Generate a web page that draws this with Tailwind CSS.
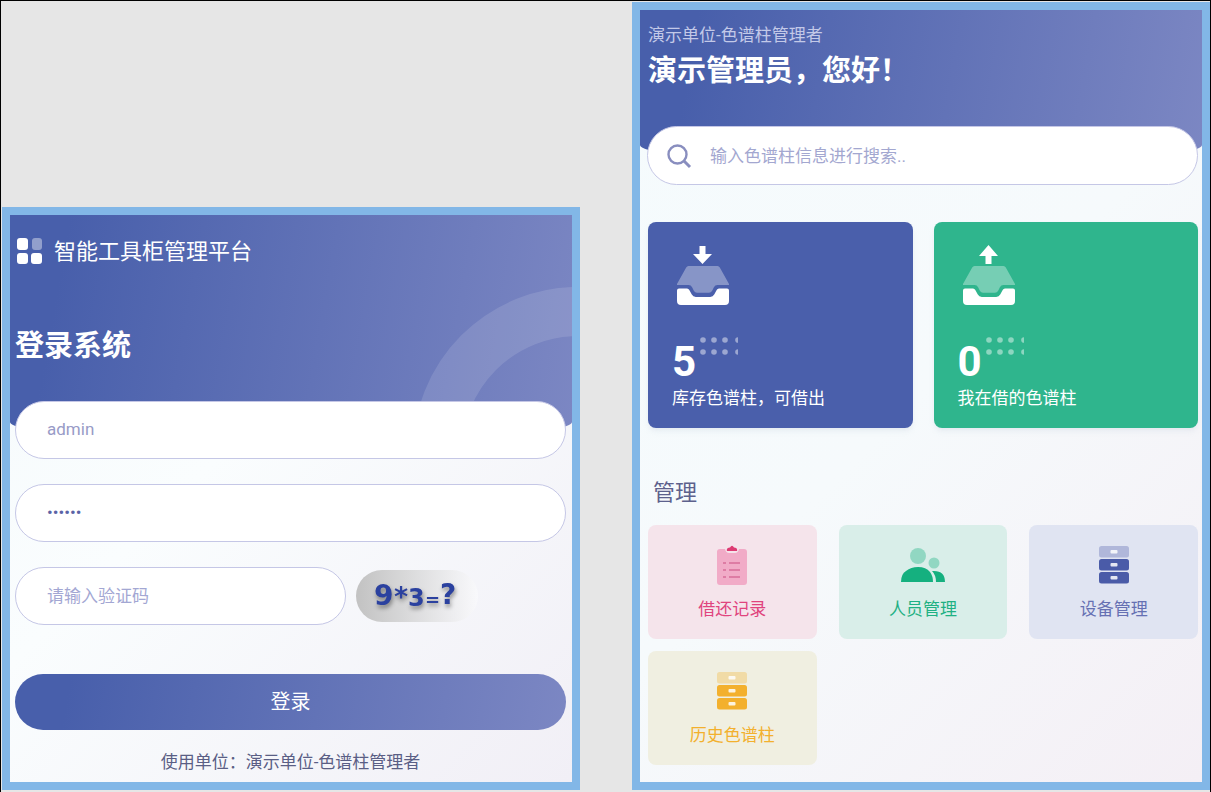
<!DOCTYPE html>
<html lang="zh-CN">
<head>
<meta charset="utf-8">
<meta name="viewport" content="width=device-width, initial-scale=1">
<title>智能工具柜管理平台</title>
<script src="https://cdn.jsdelivr.net/npm/@tailwindcss/browser@4"></script>
</head>
<body class="bg-[#e6e6e6] font-[Roboto,'Noto_Sans_CJK_SC',sans-serif] text-[17px] leading-6">
<svg class="hidden" aria-hidden="true">
  <symbol id="tray" viewBox="0 0 54 40">
    <path d="M12.500 1h29q1.600 0 2.300 1.500L53 19v1H41.500q-2.500 0-3.600 2.300L36 26q-1 1.800-3 1.800H21q-2 0-3-1.800l-1.900-3.700Q15 20 12.500 20H1v-1l9.200-16.500Q11 1 12.500 1z" fill="#fff" opacity=".34"/>
    <path d="M3 23.500h8q1.600 0 2.300 1.500l2.500 4.600q1.200 2.400 4 2.400h14.400q2.800 0 4-2.400l2.500-4.600q.7-1.500 2.300-1.500h8q2 0 2 2V36q0 4-4 4H5q-4 0-4-4V25.500q0-2 2-2z" fill="#fff"/>
  </symbol>
  <symbol id="dots" viewBox="0 0 38 18">
    <g fill="#fff" opacity=".45">
      <circle cx="3" cy="3" r="2.800"/><circle cx="14" cy="3" r="2.800"/><circle cx="25" cy="3" r="2.800"/><path d="M38 .2a2.800 2.800 0 0 0 0 5.600z"/>
      <circle cx="3" cy="15" r="2.800"/><circle cx="14" cy="15" r="2.800"/><circle cx="25" cy="15" r="2.800"/><path d="M38 12.200a2.800 2.800 0 0 0 0 5.600z"/>
    </g>
  </symbol>
  <symbol id="drawers" viewBox="0 0 32 40">
    <rect x="1" y="1" width="30" height="11.500" rx="2.500" fill="currentColor" opacity=".32"/>
    <rect x="1" y="14" width="30" height="11.500" rx="2.500" fill="currentColor"/>
    <rect x="1" y="27" width="30" height="11.500" rx="2.500" fill="currentColor"/>
    <g fill="#fff" opacity=".85"><rect x="12.500" y="5" width="7" height="3.500" rx="1"/><rect x="12.500" y="18" width="7" height="3.500" rx="1"/><rect x="12.500" y="31" width="7" height="3.500" rx="1"/></g>
  </symbol>
</svg>

<main class="flex min-h-screen items-end gap-[52px] border-x border-t border-black pb-[2px] pl-px pt-px">

  <section class="min-w-0 flex-1 border-8 border-[#82b7e7] bg-linear-135 from-[#f5fafc] via-[#fafdfe] via-40% to-[#f1eff6]">
    <header class="relative h-[227px] overflow-hidden rounded-b-[50%_20px] bg-linear-[100deg] from-[#485fab] from-10% to-[#7c87c3] pl-[5px] pt-5">
      <div class="absolute -right-[171px] top-[72px] size-[330px] rounded-full border-[49px] border-white/12"></div>
      <div class="flex h-8 items-center gap-3">
        <svg class="size-7" viewBox="0 0 28 28" fill="#fff" aria-hidden="true">
          <rect x="2" y="1" width="11" height="12" rx="3"/><rect x="17" y="1" width="10" height="12" rx="3" opacity=".4"/>
          <rect x="2" y="16" width="11" height="11" rx="3"/><rect x="16" y="16" width="11" height="11" rx="3"/>
        </svg>
        <p class="-ml-px pt-[2px] text-[22px] leading-8 text-white">智能工具柜管理平台</p>
      </div>
      <h1 class="mt-[59px] text-[29px] font-bold leading-10 text-white">登录系统</h1>
    </header>
    <form class="relative -mt-[41px] flex flex-col gap-[25px] pb-2 pl-[5px] pr-[6px]" onsubmit="return false">
      <input type="text" aria-label="用户名" value="admin" class="h-[58px] w-full rounded-full border border-[#c5c7e6] bg-white px-[31px] pb-[3px] text-[17px] text-[#989bc7] outline-none">
      <input type="password" aria-label="密码" value="123456" class="h-[58px] w-full rounded-full border border-[#c5c7e6] bg-white px-[31px] pb-[3px] text-[17px] text-[#5a63a6] outline-none">
      <div class="flex items-center gap-[10px]">
        <input type="text" aria-label="验证码" placeholder="请输入验证码" class="h-[58px] w-3/5 rounded-full border border-[#c5c7e6] bg-white px-[31px] text-[17px] outline-none placeholder:text-[#a3a7d3]">
        <button type="button" aria-label="刷新验证码" class="h-[52px] w-[122px] rounded-full bg-linear-to-r from-[#c2c2c2] to-white/40">
          <svg class="h-full w-full drop-shadow-[1px_3px_2px_#00000066]" viewBox="0 0 122 52" fill="#2b419f" font-family="'DejaVu Sans',sans-serif" font-weight="700">
            <text y="35" font-size="28" x="18">9</text><text x="38" y="36" font-size="27">*</text><text x="52" y="36" font-size="24">3</text><text x="69" y="36" font-size="18">=</text><text x="84" y="34" font-size="28">?</text>
          </svg>
        </button>
      </div>
      <button type="submit" class="mt-6 h-14 w-full rounded-full bg-linear-[100deg] from-[#485fab] from-10% to-[#7c87c3] text-[20px] text-white">登录</button>
      <p class="-mt-[5px] text-center text-[#5a5e85]">使用单位：演示单位-色谱柱管理者</p>
    </form>
  </section>

  <section class="min-w-0 flex-1 border-8 border-[#82b7e7] bg-linear-135 from-[#f5fbfd] via-[#f6fafc] via-50% to-[#f4eff5]">
    <header class="h-[155px] rounded-b-[50%_20px] bg-linear-[100deg] from-[#485fab] from-10% to-[#7c87c3] pl-2 pt-[13px]">
      <p class="text-[#c3c9e8]">演示单位-色谱柱管理者</p>
      <h2 class="mt-1 text-[29px] font-bold leading-10 text-white">演示管理员，您好！</h2>
    </header>
    <div class="relative -mt-[39px] pb-[17px] pl-[7px] pr-1">
      <label class="flex h-[59px] items-center gap-[18px] rounded-full border border-[#c5c7e6] bg-white pl-[18px]">
        <svg class="size-[26px]" viewBox="0 0 26 26" fill="none" stroke="#898ebf" stroke-width="2.400" aria-hidden="true"><circle cx="11.500" cy="11.500" r="9"/><path d="M18 18l6 6" stroke-width="3"/></svg>
        <input type="search" aria-label="搜索" placeholder="输入色谱柱信息进行搜索.." class="min-w-0 flex-1 text-[17px] outline-none placeholder:text-[#a3a7d0]">
      </label>
      <div class="mt-[37px] grid grid-cols-2 gap-[21px] pl-px text-white">
        <a href="#stock" class="block h-[206px] rounded-[8px] bg-[#4a5fab] pl-6 pt-[23px] shadow-md shadow-slate-300/30">
          <svg class="ml-1 h-5 w-[54px]" viewBox="0 0 54 20" fill="#fff" aria-hidden="true"><path d="M23.500 1h6v8H36L26.500 19 17 9h6.500z"/></svg>
          <svg class="ml-1 h-10 w-[54px]" aria-hidden="true"><use href="#tray"/></svg>
          <div class="mt-8 flex gap-1">
            <strong class="mt-1 text-[42px] leading-[42px]">5</strong>
            <svg class="h-[18px] w-[38px]" aria-hidden="true"><use href="#dots"/></svg>
          </div>
          <p class="mt-[3px]">库存色谱柱，可借出</p>
        </a>
        <a href="#mine" class="block h-[206px] rounded-[8px] bg-[#2fb58d] pl-6 pt-[23px] shadow-md shadow-slate-300/30">
          <svg class="ml-1 h-5 w-[54px]" viewBox="0 0 54 20" fill="#fff" aria-hidden="true"><path d="M23.500 19h6v-8H36L26.500 0 17 11h6.500z"/></svg>
          <svg class="ml-1 h-10 w-[54px]" aria-hidden="true"><use href="#tray"/></svg>
          <div class="mt-8 flex gap-1">
            <strong class="mt-1 text-[42px] leading-[42px]">0</strong>
            <svg class="h-[18px] w-[38px]" aria-hidden="true"><use href="#dots"/></svg>
          </div>
          <p class="mt-[3px]">我在借的色谱柱</p>
        </a>
      </div>
      <h3 class="mt-[49px] pl-[6px] text-[22px] leading-8 text-[#5d618c]">管理</h3>
      <nav class="mt-4 grid grid-cols-3 gap-x-[22px] gap-y-3 pl-px">
        <a href="#records" class="flex h-[114px] flex-col items-center rounded-[8px] bg-[#f5e4eb] pt-5 text-[#e0447e]">
          <svg class="h-10 w-8" viewBox="0 0 32 40" aria-hidden="true">
            <path d="M4 4h5q1 4 4 4h6q3 0 4-4h5q3 0 3 3v30q0 3-3 3H4q-3 0-3-3V7q0-3 3-3z" fill="#f1abc7"/>
            <path d="M11 6q-1-3 3-3.500Q16-1 18 2.500q4 .5 3 3.500z" fill="#dd3b73"/>
            <path d="M7 18h3M13 18h11M7 25h3M13 25h11M7 32h3M13 32h11" stroke="#de7ca4" stroke-width="2"/>
          </svg>
          <span class="mt-3">借还记录</span>
        </a>
        <a href="#people" class="flex h-[114px] flex-col items-center rounded-[8px] bg-[#d9eee9] pt-5 text-[#1fb184]">
          <svg class="h-10 w-[46px]" viewBox="0 0 46 40" fill="#15b07f" aria-hidden="true">
            <g opacity=".36"><circle cx="18" cy="11" r="8"/><circle cx="34" cy="18" r="5.500"/></g>
            <path d="M1 37q0-8 5-11 5-4 12-4 8 0 12 5 3 4 3 10zM32 26q13-1 13 11h-9q0-7-4-11z"/>
          </svg>
          <span class="mt-3">人员管理</span>
        </a>
        <a href="#devices" class="flex h-[114px] flex-col items-center rounded-[8px] bg-[#e0e4f2] pt-5 text-[#4a5ba8]">
          <svg class="h-10 w-8" aria-hidden="true"><use href="#drawers"/></svg>
          <span class="mt-3 text-[#6670b3]">设备管理</span>
        </a>
        <a href="#history" class="flex h-[114px] flex-col items-center rounded-[8px] bg-[#f0efe1] pt-5 text-[#f3b02d]">
          <svg class="h-10 w-8" aria-hidden="true"><use href="#drawers"/></svg>
          <span class="mt-3">历史色谱柱</span>
        </a>
      </nav>
    </div>
  </section>
</main>
</body>
</html>
